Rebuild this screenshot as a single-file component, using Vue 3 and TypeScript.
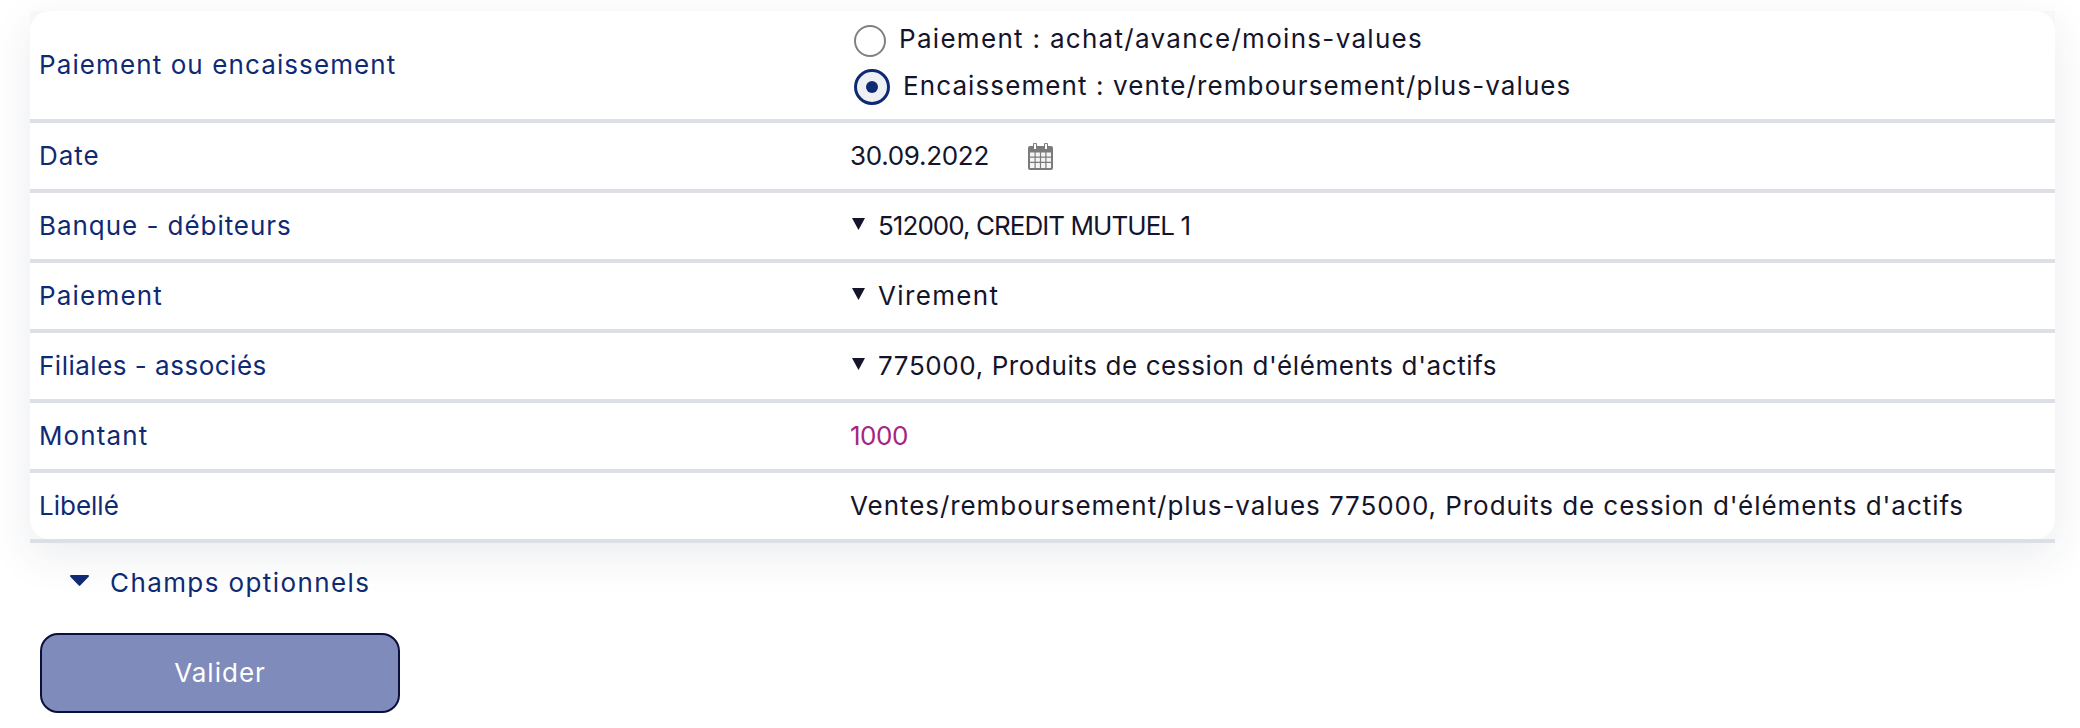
<script setup lang="ts">
interface FormRow {
  label: string
  labelSpacing: number
  value: string
  valueSpacing: number
  kind: 'text' | 'select' | 'amount' | 'date'
}

// letter-spacing per string: the fallback font has other widths than the original
const rows: FormRow[] = [
  { label: 'Date', labelSpacing: 1, value: '30.09.2022', valueSpacing: -0.3, kind: 'date' },
  { label: 'Banque - débiteurs', labelSpacing: 0.95, value: '512000, CREDIT MUTUEL 1', valueSpacing: -0.95, kind: 'select' },
  { label: 'Paiement', labelSpacing: 1.2, value: 'Virement', valueSpacing: 1.35, kind: 'select' },
  { label: 'Filiales - associés', labelSpacing: 0.5, value: "775000, Produits de cession d'éléments d'actifs", valueSpacing: 0.6, kind: 'select' },
  { label: 'Montant', labelSpacing: 1.1, value: '1000', valueSpacing: -0.5, kind: 'amount' },
  { label: 'Libellé', labelSpacing: 0, value: "Ventes/remboursement/plus-values 775000, Produits de cession d'éléments d'actifs", valueSpacing: 0.94, kind: 'text' },
]

function spacing(value: number) {
  return { letterSpacing: `${value}px` }
}
</script>

<template>
  <main class="page">
    <section class="card">
      <div class="row row-first">
        <div class="cell">
          <div class="label" :style="spacing(1.1)">Paiement ou encaissement</div>
          <div class="radios">
            <label class="radio">
              <span class="dot" />
              <span class="radio-text" :style="spacing(1.3)">Paiement : achat/avance/moins-values</span>
            </label>
            <label class="radio checked">
              <span class="dot" />
              <span class="radio-text" :style="spacing(1.1)">Encaissement : vente/remboursement/plus-values</span>
            </label>
          </div>
        </div>
      </div>
      <div v-for="row in rows" :key="row.label" class="row">
        <div class="cell">
          <div class="label" :style="spacing(row.labelSpacing)">{{ row.label }}</div>
          <div class="value" :class="row.kind">
            <svg v-if="row.kind === 'select'" class="caret" viewBox="0 0 13 12" aria-hidden="true">
              <path d="M0 0h13L6.5 12z" fill="#14142b" />
            </svg>
            <span class="value-text" :style="spacing(row.valueSpacing)">{{ row.value }}</span>
            <svg v-if="row.kind === 'date'" class="calendar" viewBox="0 0 25 27" aria-hidden="true">
              <path
                d="M2 3h3V1.5a2 2 0 0 1 4 0V3h7V1.5a2 2 0 0 1 4 0V3h3a2 2 0 0 1 2 2v20a2 2 0 0 1-2 2H2a2 2 0 0 1-2-2V5a2 2 0 0 1 2-2z"
                fill="#7b7b7b"
              />
              <path d="M6 1.8a1 1 0 0 1 2 0V6H6zM17 1.8a1 1 0 0 1 2 0V6h-2z" fill="#fff" />
              <path
                d="M2 9.5h4.5v4H2zM7.7 9.5h4.2v4H7.7zM13.1 9.5h4.2v4h-4.2zM18.5 9.5H23v4h-4.5zM2 14.7h4.5v4H2zM7.7 14.7h4.2v4H7.7zM13.1 14.7h4.2v4h-4.2zM18.5 14.7H23v4h-4.5zM2 19.9h4.5V25H2zM7.7 19.9h4.2V25H7.7zM13.1 19.9h4.2V25h-4.2zM18.5 19.9H23V25h-4.5z"
                fill="#f4f4f4"
              />
            </svg>
          </div>
        </div>
      </div>
    </section>

    <div class="optional">
      <svg class="optional-caret" viewBox="0 0 19 11" aria-hidden="true">
        <path d="M1 0h17a1 1 0 0 1 .7 1.7L10.2 10.6a1 1 0 0 1-1.4 0L.3 1.7A1 1 0 0 1 1 0z" fill="#0f2a75" />
      </svg>
      <span class="optional-text">Champs optionnels</span>
    </div>

    <button class="submit" type="button">Valider</button>
  </main>
</template>

<style>
html,
body {
  margin: 0;
  background: #fff;
}
</style>

<style scoped>
.page {
  box-sizing: border-box;
  width: 2080px;
  height: 728px;
  padding: 11px 25px 0 30px;
  overflow: hidden;
  font-family: Inter, "Liberation Sans", sans-serif;
  font-size: 26px;
  background: #fff;
}

.card {
  border-radius: 20px 20px 0 0;
  box-shadow: 0 12px 44px rgba(30, 40, 80, 0.09);
}

.row {
  border-bottom: 4px solid #dcdfe6;
  background: #f6f7f9;
}

.row-first .cell {
  height: 108px;
  border-radius: 20px 20px 0 0;
}

.row:last-child .cell {
  border-radius: 0 0 20px 20px;
}

.cell {
  display: grid;
  grid-template-columns: 811px 1fr;
  align-items: center;
  box-sizing: border-box;
  height: 66px;
  padding-left: 9px;
  background: #fff;
}

.label {
  padding-bottom: 2px;
  color: #0f2a75;
}

.value {
  display: flex;
  align-items: center;
  color: #14142b;
}

.value-text {
  padding-bottom: 2px;
}

.value.amount {
  color: #a6267f;
}

.caret {
  width: 13px;
  height: 12px;
  margin: -4px 13px 0 2px;
}

.calendar {
  width: 25px;
  height: 27px;
  margin-left: 39px;
}

.radios {
  display: flex;
  flex-direction: column;
  gap: 10px;
  margin: 0 0 2px 4px;
  color: #14142b;
}

.radio {
  display: flex;
  align-items: center;
  gap: 13px;
  height: 36px;
}

.radio-text {
  padding-bottom: 6px;
}

.checked .radio-text {
  padding-bottom: 4px;
}

.dot {
  box-sizing: border-box;
  width: 32px;
  height: 32px;
  border: 2px solid #808080;
  border-radius: 50%;
  background: #fff;
}

.checked .dot {
  position: relative;
  width: 36px;
  height: 36px;
  border: 3px solid #0f2a75;
  background: #eef0f3;
}

.checked .dot::after {
  content: "";
  position: absolute;
  top: 9px;
  left: 9px;
  width: 12px;
  height: 12px;
  border-radius: 50%;
  background: #0f2a75;
}

.optional {
  display: flex;
  align-items: center;
  height: 46px;
  margin: 17px 0 0 40px;
  color: #0f2a75;
  letter-spacing: 1.4px;
}

.optional-text {
  padding-bottom: 2px;
}

.optional-caret {
  width: 19px;
  height: 11px;
  margin: -6px 21px 0 0;
}

.submit {
  display: block;
  box-sizing: border-box;
  width: 360px;
  height: 80px;
  margin: 27px 0 0 10px;
  padding-bottom: 3px;
  border: 2px solid #0a0f3c;
  border-radius: 18px;
  background: #7f8bbb;
  color: #fff;
  font: inherit;
  letter-spacing: 1px;
}
</style>
